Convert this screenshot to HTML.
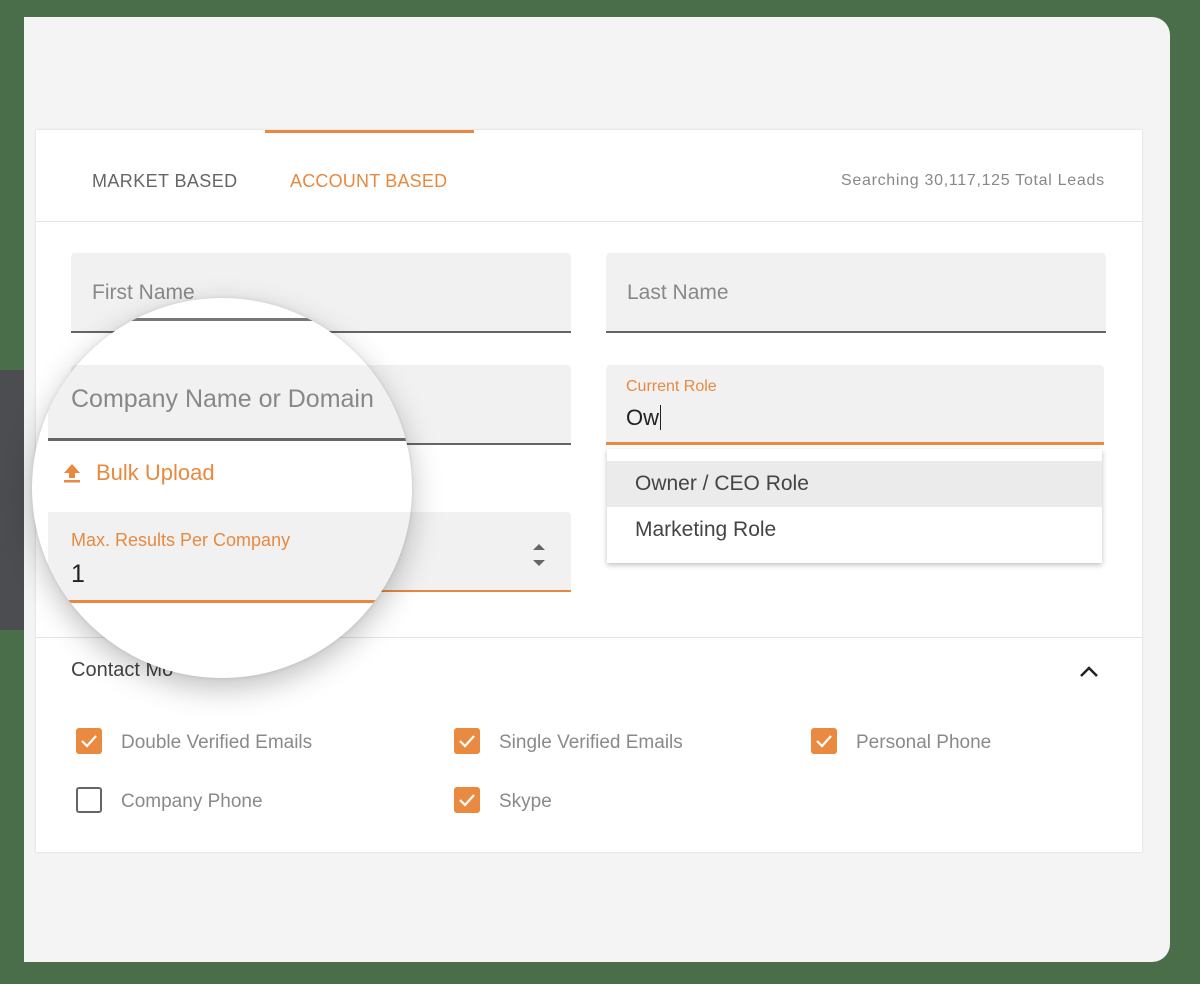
<!DOCTYPE html>
<html><head><style>
*{margin:0;padding:0;box-sizing:border-box}
body{width:1200px;height:984px;background:#4a6e4a;position:relative;overflow:hidden;font-family:"Liberation Sans",sans-serif}
.a{position:absolute}
.panel{left:24px;top:17px;width:1146px;height:945px;background:#f4f4f4;border-radius:0 18px 18px 0}
.card{left:36px;top:130px;width:1106px;height:722px;background:#fff;box-shadow:0 0 2px rgba(0,0,0,.15)}
.fld{background:#f1f1f2;border-radius:4px 4px 0 0;border-bottom:2px solid #666}
.ph{color:#888;font-size:21px}
.or{color:#e8893f}
.cb{width:26px;height:26px;border-radius:3px;background:#e98a40}
.cb svg{position:absolute;left:4px;top:5px}
.cbl{color:#8a8a8a;font-size:19px}
.circ{left:32px;top:298px;width:380px;height:380px;border-radius:50%;background:#fff;overflow:hidden;box-shadow:0 10px 30px rgba(0,0,0,.25),0 0 4px rgba(0,0,0,.1)}
</style></head><body>
<div class="a" style="left:0;top:370px;width:24px;height:260px;background:#4b4d51"></div>
<div class="a panel"></div>
<div class="a card"></div>
<div class="a" style="left:265px;top:130px;width:209px;height:3px;background:#e8893f"></div>
<div class="a" style="left:92px;top:171px;font-size:18px;color:#666;letter-spacing:.4px">MARKET BASED</div>
<div class="a or" style="left:290px;top:171px;font-size:18px;letter-spacing:.2px">ACCOUNT BASED</div>
<div class="a" style="left:841px;top:172px;font-size:16px;color:#888;letter-spacing:.7px">Searching 30,117,125 Total Leads</div>
<div class="a" style="left:36px;top:221px;width:1106px;height:1px;background:#e4e4e4"></div>

<div class="a fld" style="left:71px;top:253px;width:500px;height:80px"></div>
<div class="a ph" style="left:92px;top:281px">First Name</div>
<div class="a fld" style="left:606px;top:253px;width:500px;height:80px"></div>
<div class="a ph" style="left:627px;top:281px">Last Name</div>
<div class="a fld" style="left:71px;top:365px;width:500px;height:80px"></div>
<div class="a fld" style="left:71px;top:512px;width:500px;height:80px;border-bottom-color:#e8893f"></div>
<svg class="a" style="left:530px;top:541px" width="18" height="28"><path d="M3 9 L9 3 L15 9 Z M3 19 L9 25 L15 19 Z" fill="#666"/></svg>

<div class="a fld" style="left:606px;top:365px;width:498px;height:80px;border-bottom:3px solid #e8893f"></div>
<div class="a or" style="left:626px;top:378px;font-size:16px">Current Role</div>
<div class="a" style="left:626px;top:405px;font-size:22px;color:#222">Ow<span style="border-left:1.5px solid #222;margin-left:1px"></span></div>
<div class="a" style="left:607px;top:449px;width:495px;height:114px;background:#fff;box-shadow:0 2px 5px rgba(0,0,0,.25)"></div>
<div class="a" style="left:607px;top:461px;width:495px;height:46px;background:#ebebeb"></div>
<div class="a" style="left:635px;top:472px;font-size:21px;color:#444">Owner / CEO Role</div>
<div class="a" style="left:635px;top:518px;font-size:21px;color:#444">Marketing Role</div>

<div class="a" style="left:36px;top:637px;width:1106px;height:1px;background:#e4e4e4"></div>
<div class="a" style="left:71px;top:659px;font-size:20px;color:#444">Contact Mo</div>
<svg class="a" style="left:1078px;top:664px" width="22" height="16"><path d="M3 12 L11 4 L19 12" stroke="#222" stroke-width="2.5" fill="none"/></svg>

<div class="a cb" style="left:76px;top:728px"><svg width="18" height="16"><path d="M2 8 L7 13 L16 3" stroke="#fff" stroke-width="2.2" fill="none"/></svg></div>
<div class="a cbl" style="left:121px;top:732px">Double Verified Emails</div>
<div class="a cb" style="left:454px;top:728px"><svg width="18" height="16"><path d="M2 8 L7 13 L16 3" stroke="#fff" stroke-width="2.2" fill="none"/></svg></div>
<div class="a cbl" style="left:499px;top:732px">Single Verified Emails</div>
<div class="a cb" style="left:811px;top:728px"><svg width="18" height="16"><path d="M2 8 L7 13 L16 3" stroke="#fff" stroke-width="2.2" fill="none"/></svg></div>
<div class="a cbl" style="left:856px;top:732px">Personal Phone</div>
<div class="a" style="left:76px;top:787px;width:26px;height:26px;border:2.5px solid #666;border-radius:3px"></div>
<div class="a cbl" style="left:121px;top:791px">Company Phone</div>
<div class="a cb" style="left:454px;top:787px"><svg width="18" height="16"><path d="M2 8 L7 13 L16 3" stroke="#fff" stroke-width="2.2" fill="none"/></svg></div>
<div class="a cbl" style="left:499px;top:791px">Skype</div>

<div class="a circ">
  <div class="a" style="left:98px;top:20px;width:300px;height:3px;background:#777"></div>
  <div class="a" style="left:16px;top:67px;width:380px;height:76px;background:#f1f1f2;border-bottom:3px solid #666"></div>
  <div class="a" style="left:39px;top:87px;font-size:25px;color:#888">Company Name or Domain</div>
  <svg class="a" style="left:30px;top:164px" width="20" height="22"><path d="M10 2 L18 11 L13 11 L13 16 L7 16 L7 11 L2 11 Z" fill="#e8893f"/><rect x="2" y="18" width="16" height="2.5" fill="#e8893f"/></svg>
  <div class="a or" style="left:64px;top:162px;font-size:22px">Bulk Upload</div>
  <div class="a" style="left:16px;top:214px;width:380px;height:91px;background:#f1f1f2;border-bottom:3px solid #e8893f"></div>
  <div class="a or" style="left:39px;top:232px;font-size:18px">Max. Results Per Company</div>
  <div class="a" style="left:39px;top:262px;font-size:25px;color:#222">1</div>
</div>
</body></html>
